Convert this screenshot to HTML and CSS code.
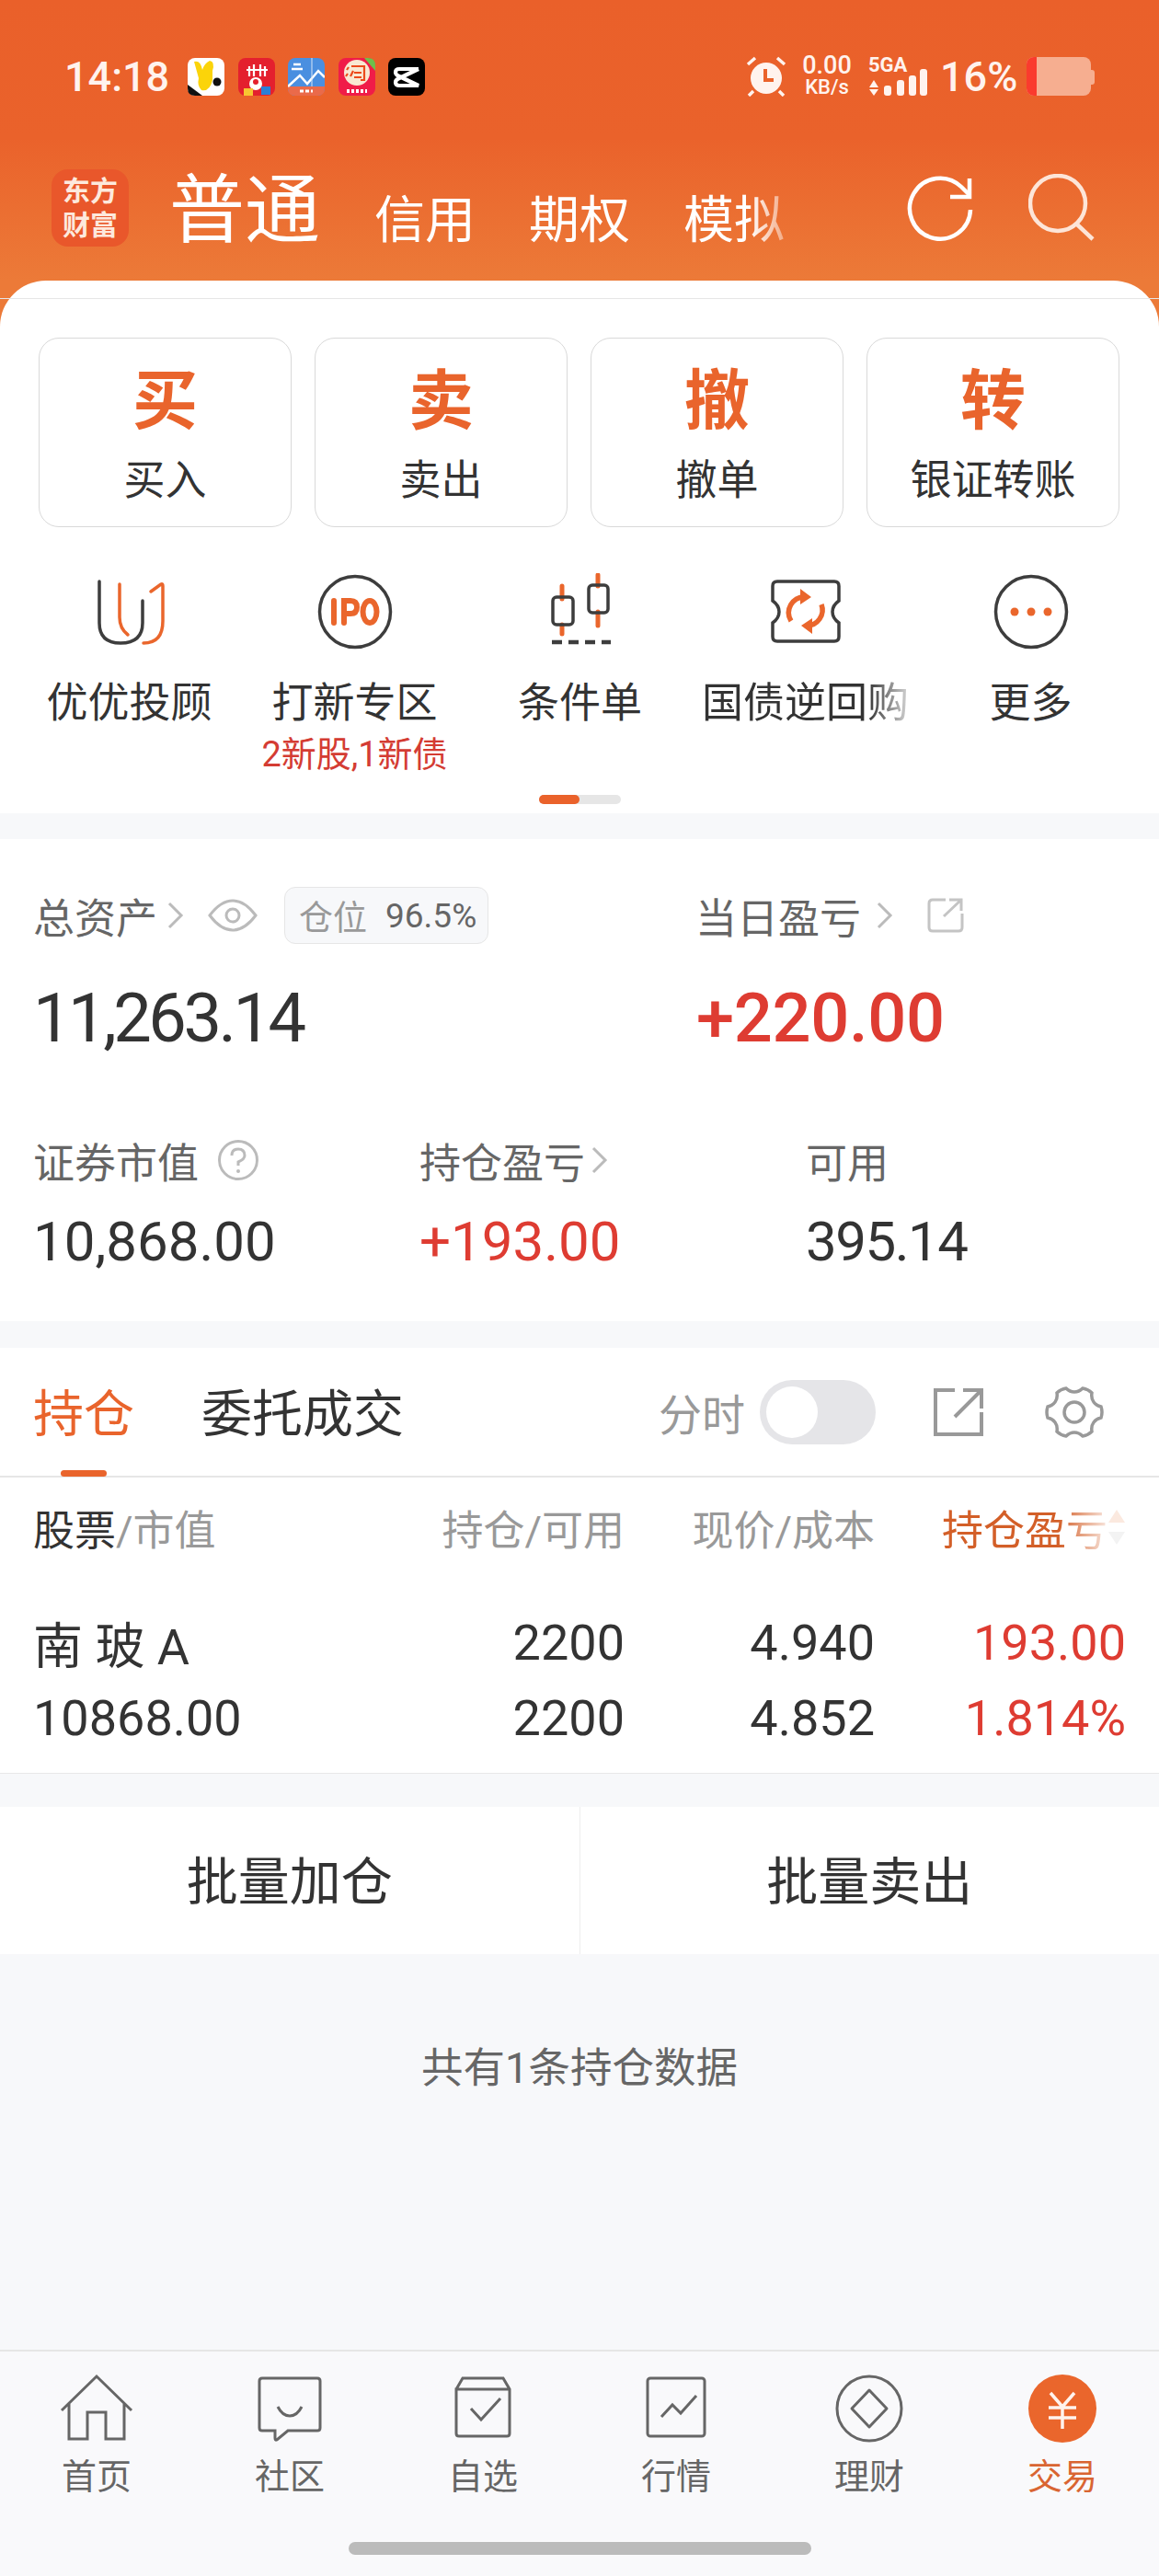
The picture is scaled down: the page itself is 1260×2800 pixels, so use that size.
FILE: index.html
```html
<!DOCTYPE html>
<html lang="zh-CN">
  <head>
    <meta charset="UTF-8" />
    <meta name="viewport" content="width=device-width, initial-scale=1.0" />
    <title>交易</title>
    <link rel="stylesheet" href="styles.css">
  </head>

  <body>
    <div class="header">
      <div class="status-bar">
        <span class="time">14:18</span>
        <div class="app-icons">
          <svg class="app-icon" viewBox="0 0 40 41"><rect width="40" height="41" rx="8" fill="#fff"/><path d="M0 29 L16 41 H8 Q0 41 0 33Z" fill="#111"/><path d="M7 4 Q14 2 16 13 Q18 6 24 3 Q30 4 27 14 L27 24 Q24 37 15 35 Q10 30 12 22Z" fill="#fbd40a"/><circle cx="32" cy="26" r="4.5" fill="#111"/></svg>
          <svg class="app-icon" viewBox="0 0 40 41"><rect width="40" height="41" rx="8" fill="#e4202e"/><path d="M12 9 V20 M17 7 V20 M24 7 V20 M29 9 V20 M9 13 H32" stroke="#fff" stroke-width="2.2"/><circle cx="19" cy="28" r="7" fill="#fff"/><circle cx="19" cy="26" r="3" fill="#e4202e"/><rect x="25" y="31" width="10" height="9" fill="#2b7fd6"/><rect x="6" y="33" width="10" height="8" fill="#f7c531"/></svg>
          <svg class="app-icon" viewBox="0 0 40 41"><rect width="40" height="41" rx="8" fill="#4a8fe0"/><path d="M0 31 H40 V33 Q40 41 32 41 H8 Q0 41 0 33Z" fill="#ea6a4a"/><path d="M0 31 L13 19 L21 28 L33 14 L40 21" fill="none" stroke="#fff" stroke-width="2.5"/><path d="M26 0 V31" stroke="#d9e6f6"/><path d="M4 12 H16 M6 7 H14" stroke="#fff" stroke-width="2.5"/><path d="M13 36 H27" stroke="#fff" stroke-width="3" stroke-dasharray="4 2"/></svg>
          <svg class="app-icon" viewBox="0 0 40 41"><rect width="40" height="41" rx="8" fill="#f01c48"/><path d="M28 0 H32 Q40 0 40 8 V14Z" fill="#6fbf4a"/><circle cx="20" cy="16" r="14" fill="#f9e8d2"/><path d="M14 9 H28 V24 H24 M11 10 L9 13 M10 17 L8 20 M16 14 L13 20 M17 16 H25 M17 21 H25" fill="none" stroke="#ec4a1c" stroke-width="2.2"/><path d="M9 36 H31" stroke="#fff" stroke-width="4" stroke-dasharray="3 2"/></svg>
          <svg class="app-icon" viewBox="0 0 40 41"><rect width="40" height="41" rx="8" fill="#000"/><path d="M33 12 H12 Q8 12 8 15.5 Q8 18 11 19.5 L33 30 H12 Q8 30 8 26.5 Q8 24 11 22.5 L33 12" fill="none" stroke="#fff" stroke-width="4.2"/></svg>
        </div>
        <div class="status-right">
          <svg class="alarm" viewBox="0 0 44 44"><circle cx="22" cy="24" r="17" fill="#fff3ee"/><path d="M21 14 V26 H30" fill="none" stroke="#ea622b" stroke-width="4"/><path d="M2 9 L10 2 M42 9 L34 2 M8 38 L3 43 M36 38 L41 43" stroke="#fff3ee" stroke-width="3.5"/></svg>
          <div class="net-speed"><span>0.00</span><span class="net-unit">KB/s</span></div>
          <div class="signal">
            <span class="signal-name">5GA</span>
            <svg class="signal-bars" viewBox="0 0 66 42"><path d="M6 25 L11 33 H1Z M6 42 L11 35 H1Z" fill="#fff3ee"/><rect x="17" y="31" width="8" height="11" rx="3" fill="#fff3ee"/><rect x="31" y="25" width="8" height="17" rx="3" fill="#fff3ee"/><rect x="44" y="20" width="8" height="22" rx="3" fill="#fff3ee"/><rect x="56" y="13" width="8" height="29" rx="3" fill="#fff3ee"/></svg>
          </div>
          <span class="battery-pct">16%</span>
          <div class="battery"><span class="battery-level"></span><span class="battery-cap"></span></div>
        </div>
      </div>

      <div class="nav">
        <div class="logo"><span>东方</span><span>财富</span></div>
        <span class="nav-active">普通</span>
        <div class="nav-tabs">
          <span>信用</span>
          <span>期权</span>
          <span class="nav-fade">模拟</span>
        </div>
        <div class="nav-actions">
          <svg class="nav-icon" viewBox="0 0 72 74"><path d="M69 39 A33 33 0 1 1 59 14 L68 23" fill="none" stroke="#fff" stroke-width="4.5"/><path d="M68 5 V25 H47" fill="none" stroke="#fff" stroke-width="4.5"/></svg>
          <svg class="nav-icon" viewBox="0 0 72 74"><ellipse cx="32" cy="32" rx="30" ry="30" fill="none" stroke="#fde5d8" stroke-width="4.5"/><path d="M53 55 L70 71" stroke="#fde5d8" stroke-width="4.5"/></svg>
        </div>
      </div>
    </div>

    <div class="card">
      <div class="card-line"></div>
      <div class="trade-buttons">
        <div class="trade-button"><span class="trade-char">买</span><span class="trade-label">买入</span></div>
        <div class="trade-button"><span class="trade-char">卖</span><span class="trade-label">卖出</span></div>
        <div class="trade-button"><span class="trade-char">撤</span><span class="trade-label">撤单</span></div>
        <div class="trade-button"><span class="trade-char">转</span><span class="trade-label">银证转账</span></div>
      </div>

      <div class="shortcuts">
        <div class="shortcut">
          <svg class="shortcut-icon" viewBox="0 0 84 84"><path d="M9 9 V54 Q9 76 32 76 Q56 76 56 54 V30" fill="none" stroke="#3d3d3d" stroke-width="3.5" stroke-linecap="round"/><path d="M31 12 V48 Q31 60 40 67" fill="none" stroke="#ea662c" stroke-width="3.5" stroke-linecap="round"/><path d="M65 20 L76 12 Q78 11 78 14 V52 Q78 76 57 76" fill="none" stroke="#ea662c" stroke-width="3.5" stroke-linecap="round"/></svg>
          <span class="shortcut-label">优优投顾</span>
        </div>
        <div class="shortcut">
          <svg class="shortcut-icon" viewBox="0 0 84 84"><circle cx="42" cy="42" r="38.5" fill="none" stroke="#3d3d3d" stroke-width="3.5"/><path d="M19 30 V54 M30 54 V30 H37 Q44 30 44 37 Q44 44 37 44 H30" fill="none" stroke="#ea662c" stroke-width="6" stroke-linecap="round"/><ellipse cx="58" cy="42" rx="7.5" ry="12" fill="none" stroke="#ea662c" stroke-width="6"/></svg>
          <span class="shortcut-label">打新专区</span>
          <span class="shortcut-sub">2新股,1新债</span>
        </div>
        <div class="shortcut">
          <svg class="shortcut-icon" viewBox="0 0 84 84"><path d="M22 14 V28 M22 56 V66 M61 2 V14 M61 42 V57" stroke="#ea662c" stroke-width="5" stroke-linecap="round"/><rect x="12" y="26" width="22" height="30" rx="4" fill="none" stroke="#3d3d3d" stroke-width="3.5"/><rect x="51" y="13" width="21" height="30" rx="4" fill="none" stroke="#3d3d3d" stroke-width="3.5"/><path d="M11 75 H75" stroke="#3d3d3d" stroke-width="4.5" stroke-dasharray="11 7"/></svg>
          <span class="shortcut-label">条件单</span>
        </div>
        <div class="shortcut">
          <svg class="shortcut-icon" viewBox="0 0 84 84"><path d="M6 14 Q6 9 11 9 H73 Q78 9 78 14 V30 Q71 35 71 42 Q71 49 78 54 V69 Q78 74 73 74 H11 Q6 74 6 69 V54 Q13 49 13 42 Q13 35 6 30Z" fill="none" stroke="#3d3d3d" stroke-width="3.5"/><path d="M26 52 A17 17 0 0 1 41 26 M59 34 A17 17 0 0 1 43 57" fill="none" stroke="#ea662c" stroke-width="5.5"/><path d="M36 17 L48 26 L36 34Z M49 49 L37 57 L49 66Z" fill="#ea662c"/></svg>
          <span class="shortcut-label shortcut-fade">国债逆回购</span>
        </div>
        <div class="shortcut">
          <svg class="shortcut-icon" viewBox="0 0 84 84"><circle cx="42" cy="42" r="38.5" fill="none" stroke="#3d3d3d" stroke-width="3.5"/><circle cx="24" cy="42" r="4.5" fill="#ea662c"/><circle cx="42" cy="42" r="4.5" fill="#ea662c"/><circle cx="60" cy="42" r="4.5" fill="#ea662c"/></svg>
          <span class="shortcut-label">更多</span>
        </div>
      </div>
      <div class="pager"><span class="pager-on"></span></div>
    </div>

    <div class="assets">
      <div class="asset-top">
        <div class="asset-main">
          <div class="asset-label">
            <span>总资产</span>
            <svg class="chevron" viewBox="0 0 20 32"><path d="M3 3 L16 16 L3 29" fill="none" stroke="#bbb" stroke-width="3"/></svg>
            <svg class="eye" viewBox="0 0 54 36"><path d="M2 18 Q14 2 27 2 Q40 2 52 18 Q40 34 27 34 Q14 34 2 18Z" fill="none" stroke="#bbb" stroke-width="3"/><circle cx="27" cy="18" r="7" fill="none" stroke="#bbb" stroke-width="3"/></svg>
            <div class="position-tag"><span class="position-name">仓位</span><span class="position-value">96.5%</span></div>
          </div>
          <div class="asset-value">11,263.14</div>
        </div>
        <div class="asset-day">
          <div class="asset-label">
            <span>当日盈亏</span>
            <svg class="chevron chevron-wide" viewBox="0 0 20 32"><path d="M3 3 L16 16 L3 29" fill="none" stroke="#bbb" stroke-width="3"/></svg>
            <svg class="share-small" viewBox="0 0 40 40"><path d="M20 3 H6 Q2 3 2 7 V33 Q2 37 6 37 H34 Q38 37 38 33 V18" fill="none" stroke="#c4c4c4" stroke-width="3"/><path d="M18 21 L37 3 M24 3 H37 V15" fill="none" stroke="#c4c4c4" stroke-width="3"/></svg>
          </div>
          <div class="asset-value asset-up up">+220.00</div>
        </div>
      </div>
      <div class="asset-bottom">
        <div class="asset-cell">
          <div class="asset-label">
            <span>证券市值</span>
            <svg class="help" viewBox="0 0 46 46"><circle cx="23" cy="23" r="20.5" fill="none" stroke="#bbb" stroke-width="3"/><path d="M16 18 Q16 11 23 11 Q30 11 30 18 Q30 22 23 25 V29" fill="none" stroke="#bbb" stroke-width="3"/><circle cx="23" cy="35" r="2" fill="#bbb"/></svg>
          </div>
          <div class="cell-value">10,868.00</div>
        </div>
        <div class="asset-cell">
          <div class="asset-label">
            <span>持仓盈亏</span>
            <svg class="chevron chevron-tight" viewBox="0 0 20 32"><path d="M3 3 L16 16 L3 29" fill="none" stroke="#bbb" stroke-width="3"/></svg>
          </div>
          <div class="cell-value up">+193.00</div>
        </div>
        <div class="asset-cell">
          <div class="asset-label"><span>可用</span></div>
          <div class="cell-value cell-narrow">395.14</div>
        </div>
      </div>
    </div>

    <div class="holdings">
      <div class="tabs">
        <div class="tab tab-active">持仓<span class="tab-bar"></span></div>
        <div class="tab">委托成交</div>
        <div class="tab-tools">
          <span class="toggle-label">分时</span>
          <div class="toggle"><span class="toggle-knob"></span></div>
          <svg class="tool-share" viewBox="0 0 56 56"><path d="M24 4 H3 V52 H53 V28" fill="none" stroke="#999" stroke-width="4"/><path d="M24 33 L52 5 M33 4 H53 V24" fill="none" stroke="#999" stroke-width="4"/></svg>
          <svg class="tool-gear" viewBox="0 0 64 62"><path d="M23 5 Q27 9 32 9 Q37 9 41 5 Q47 6 51 10 Q50 16 53 20 Q56 24 61 25 Q63 31 61 37 Q56 38 53 42 Q50 46 51 52 Q47 56 41 57 Q37 53 32 53 Q27 53 23 57 Q17 56 13 52 Q14 46 11 42 Q8 38 3 37 Q1 31 3 25 Q8 24 11 20 Q14 16 13 10 Q17 6 23 5Z" fill="none" stroke="#999" stroke-width="3.5"/><circle cx="32" cy="31" r="11" fill="none" stroke="#999" stroke-width="3.5"/></svg>
        </div>
      </div>

      <div class="table-head">
        <div class="col col-name"><span class="head-dark">股票</span>/市值</div>
        <div class="col col-num">持仓/可用</div>
        <div class="col col-num col-price">现价/成本</div>
        <div class="col col-profit head-sort">
          <span class="head-sort-text">持仓盈亏</span>
          <svg class="sort-arrows" viewBox="0 0 20 40"><path d="M10 1 L19 15 H1Z" fill="#fbe9df"/><path d="M10 39 L19 25 H1Z" fill="#f3f3f3"/></svg>
        </div>
      </div>

      <div class="table-row row-top">
        <div class="col col-name">南 玻 A</div>
        <div class="col col-num">2200</div>
        <div class="col col-num col-price">4.940</div>
        <div class="col col-profit up">193.00</div>
      </div>
      <div class="table-row">
        <div class="col col-name">10868.00</div>
        <div class="col col-num">2200</div>
        <div class="col col-num col-price">4.852</div>
        <div class="col col-profit up">1.814%</div>
      </div>
    </div>

    <div class="batch">
      <div class="batch-button">批量加仓</div>
      <div class="batch-button">批量卖出</div>
    </div>

    <div class="summary">共有1条持仓数据</div>

    <div class="tabbar">
      <div class="tabbar-items">
        <div class="tabbar-item">
          <svg class="tabbar-icon" viewBox="0 0 80 76"><path d="M2 40 L40 3 L78 40 M10 33 V71 H30 V42 H50 V71 H70 V33" fill="none" stroke="#666" stroke-width="3"/></svg>
          <span>首页</span>
        </div>
        <div class="tabbar-item">
          <svg class="tabbar-icon" viewBox="0 0 80 76"><path d="M10 5 H70 Q73 5 73 8 V59 Q73 62 70 62 H38 L26 72 Q24 73 24 70 V62 H10 Q7 62 7 59 V8 Q7 5 10 5Z" fill="none" stroke="#666" stroke-width="3"/><path d="M27 36 Q32 46 40 46 Q48 46 53 36" fill="none" stroke="#666" stroke-width="3"/></svg>
          <span>社区</span>
        </div>
        <div class="tabbar-item">
          <svg class="tabbar-icon" viewBox="0 0 80 76"><path d="M11 17 L18 5 H62 L69 17 V65 Q69 68 66 68 H14 Q11 68 11 65 V17 H69" fill="none" stroke="#666" stroke-width="3"/><path d="M27 38 L38 50 L59 27" fill="none" stroke="#666" stroke-width="3"/></svg>
          <span>自选</span>
        </div>
        <div class="tabbar-item">
          <svg class="tabbar-icon" viewBox="0 0 80 76"><rect x="9" y="5" width="62" height="63" rx="3" fill="none" stroke="#666" stroke-width="3"/><path d="M24 47 L36 34 L45 43 L62 24" fill="none" stroke="#666" stroke-width="3"/></svg>
          <span>行情</span>
        </div>
        <div class="tabbar-item">
          <svg class="tabbar-icon" viewBox="0 0 80 76"><circle cx="40" cy="38" r="35" fill="none" stroke="#666" stroke-width="3"/><path d="M40 18 L59 38 L40 58 L21 38Z" fill="none" stroke="#666" stroke-width="3" stroke-linejoin="round"/></svg>
          <span>理财</span>
        </div>
        <div class="tabbar-item tabbar-active">
          <svg class="tabbar-icon" viewBox="0 0 80 76"><circle cx="40" cy="38" r="37" fill="#ea662c"/><path d="M27 21 L40 36 L53 21 M25 37 H55 M25 48 H55 M40 36 V60" fill="none" stroke="#fff3ee" stroke-width="3.5"/></svg>
          <span>交易</span>
        </div>
      </div>
      <div class="home-bar"></div>
    </div>
  </body>
</html>
```

FILE: styles.css
```css
* {
  box-sizing: border-box;
}

html,
body {
  margin: 0;
}

body {
  width: 1260px;
  height: 2800px;
  display: flex;
  flex-direction: column;
  background-color: #f7f8fa;
  color: #333;
  font-family: Roboto, "Noto Sans CJK SC", sans-serif;
  overflow: hidden;
}

svg {
  display: block;
  flex: none;
}

.up {
  color: #de3c32;
}

/* orange header */
.header {
  height: 355px;
  flex: none;
  padding: 62px 70px 0 56px;
  background: linear-gradient(#ea602a 0, #ea622b 150px, #ec7a38 305px);
  color: white;
}

.status-bar {
  display: flex;
  align-items: center;
  height: 42px;
}

.time {
  width: 148px;
  padding-left: 14px;
  font-size: 45px;
  font-weight: 500;
  color: #fff3ee;
}

.app-icons {
  display: flex;
  gap: 14.5px;
}

.app-icon {
  width: 40px;
  height: 41px;
}

.status-right {
  display: flex;
  align-items: center;
  margin-left: auto;
  padding-right: 4px;
  color: #fff3ee;
}

.alarm {
  width: 44px;
  height: 44px;
}

.net-speed {
  display: flex;
  flex-direction: column;
  align-items: center;
  width: 54px;
  margin-left: 17px;
  font-size: 27px;
  font-weight: 500;
  line-height: 23px;
}

.net-unit {
  font-size: 22px;
}

.signal {
  position: relative;
  width: 66px;
  height: 42px;
  margin-left: 18px;
}

.signal-name {
  position: absolute;
  left: 0;
  top: -3px;
  font-size: 22px;
  font-weight: 700;
  line-height: 24px;
}

.signal-bars {
  width: 66px;
  height: 42px;
}

.battery-pct {
  width: 84px;
  margin-left: 12px;
  font-size: 45px;
  font-weight: 500;
}

.battery {
  position: relative;
  display: flex;
  width: 70px;
  height: 42px;
  margin-left: 10px;
  border-radius: 8px;
  background-color: #f6ae90;
}

.battery-level {
  width: 11px;
  border-radius: 8px 0 0 8px;
  background-color: #fa3b2e;
}

.battery-cap {
  position: absolute;
  right: -4px;
  top: 14px;
  width: 4px;
  height: 16px;
  border-radius: 0 3px 3px 0;
  background-color: #f6ae90;
}

.nav {
  display: flex;
  align-items: flex-end;
  height: 84px;
  margin-top: 80px;
}

.logo {
  display: flex;
  flex-direction: column;
  justify-content: center;
  align-items: center;
  width: 84px;
  height: 84px;
  border-radius: 18px;
  background-color: #e9572b;
  font-size: 30px;
  font-weight: 700;
  line-height: 37px;
  color: #fde9dd;
}

.nav-active {
  margin-left: 44px;
  font-size: 82px;
  line-height: 78px;
}

.nav-tabs {
  display: flex;
  gap: 58px;
  margin-left: 59px;
  font-size: 55px;
  line-height: 58px;
}

.nav-fade {
  -webkit-mask-image: linear-gradient(to right, #000 65%, rgba(0, 0, 0, 0.4) 100%);
  mask-image: linear-gradient(to right, #000 65%, rgba(0, 0, 0, 0.4) 100%);
}

.nav-actions {
  display: flex;
  gap: 60px;
  margin-left: auto;
  margin-bottom: 5px;
}

.nav-icon {
  width: 72px;
  height: 74px;
}

/* white card with trade buttons */
.card {
  flex: none;
  height: 579px;
  margin-top: -50px;
  position: relative;
  border-radius: 50px 50px 0 0;
  background-color: white;
}

.card-line {
  height: 1px;
  margin-top: 19px;
  background-color: #e6e6e6;
}

.trade-buttons {
  display: grid;
  grid-template-columns: repeat(4, 275px);
  gap: 25px;
  padding: 42px 0 0 42px;
}

.trade-button {
  display: flex;
  flex-direction: column;
  align-items: center;
  height: 206px;
  border: 1.5px solid #d9d9d9;
  border-radius: 22px;
}

.trade-char {
  margin-top: 24px;
  font-size: 71px;
  font-weight: 700;
  line-height: 88px;
  color: #e9642c;
}

.trade-label {
  margin-top: 13px;
  font-size: 45px;
  line-height: 60px;
}

.shortcuts {
  display: grid;
  grid-template-columns: repeat(5, 245px);
  padding: 50px 0 0 18px;
}

.shortcut {
  display: flex;
  flex-direction: column;
  align-items: center;
}

.shortcut-icon {
  width: 84px;
  height: 84px;
}

.shortcut-label {
  margin-top: 27px;
  font-size: 45px;
  line-height: 62px;
}

.shortcut-sub {
  font-size: 38px;
  line-height: 49px;
  color: #d43c33;
}

.shortcut-fade {
  -webkit-mask-image: linear-gradient(to right, #000 80%, rgba(0, 0, 0, 0.2) 100%);
  mask-image: linear-gradient(to right, #000 80%, rgba(0, 0, 0, 0.2) 100%);
}

.pager {
  position: absolute;
  left: 586px;
  top: 559px;
  width: 89px;
  height: 10px;
  border-radius: 5px;
  background-color: #e6e6e6;
}

.pager-on {
  display: block;
  width: 44px;
  height: 10px;
  border-radius: 5px;
  background-color: #ea622b;
}

/* assets */
.assets {
  flex: none;
  height: 524px;
  margin-top: 28px;
  padding: 52px 0 0 36px;
  background-color: white;
}

.asset-top {
  display: flex;
  height: 266px;
}

.asset-main {
  width: 720px;
}

.asset-label {
  display: flex;
  align-items: center;
  height: 62px;
  font-size: 45px;
  color: #666;
}

.chevron {
  width: 20px;
  height: 32px;
  margin-left: 10px;
}

.chevron-wide {
  margin-left: 16px;
}

.chevron-tight {
  margin-left: 6px;
}

.eye {
  width: 54px;
  height: 36px;
  margin-left: 25px;
}

.position-tag {
  display: flex;
  align-items: center;
  gap: 20px;
  height: 62px;
  margin-left: 29px;
  padding: 0 12px 0 15px;
  border: 1.5px solid #e6e6e6;
  border-radius: 12px;
  background-color: #f7f8fa;
  font-size: 37px;
}

.position-name {
  color: #999;
}

.share-small {
  width: 40px;
  height: 40px;
  margin-left: 36px;
}

.asset-value {
  margin-top: 36px;
  font-size: 74px;
  line-height: 90px;
  letter-spacing: -3.5px;
}

.asset-up {
  margin-left: 1px;
  font-weight: 500;
  letter-spacing: -0.3px;
}

.asset-bottom {
  display: flex;
}

.asset-cell {
  flex: none;
  width: 420px;
}

.help {
  width: 46px;
  height: 46px;
  margin-left: 20px;
}

.cell-value {
  margin-top: 22px;
  font-size: 60px;
  line-height: 72px;
}

.cell-narrow {
  letter-spacing: -1.5px;
}

/* holdings table */
.holdings {
  flex: none;
  height: 463px;
  margin-top: 29px;
  border-bottom: 1.5px solid #e8e8e8;
  background-color: white;
}

.tabs {
  display: flex;
  align-items: center;
  height: 141px;
  padding: 0 60px 0 36px;
  border-bottom: 2px solid #e6e6e6;
}

.tab {
  position: relative;
  padding-top: 6px;
  font-size: 55px;
  line-height: 135px;
  margin-right: 73px;
}

.tab-active {
  color: #e9642c;
}

.tab-bar {
  position: absolute;
  left: 30px;
  bottom: 0;
  width: 50px;
  height: 7px;
  border-radius: 4px;
  background-color: #e9642c;
}

.tab-tools {
  display: flex;
  align-items: center;
  margin-left: auto;
}

.toggle-label {
  font-size: 47px;
  color: #999;
}

.toggle {
  width: 126px;
  height: 70px;
  margin-left: 16px;
  padding: 7px;
  border-radius: 35px;
  background-color: #e5e5e8;
}

.toggle-knob {
  display: block;
  width: 56px;
  height: 56px;
  border-radius: 50%;
  background-color: white;
}

.tool-share {
  width: 56px;
  height: 56px;
  margin-left: 62px;
}

.tool-gear {
  width: 64px;
  height: 62px;
  margin-left: 66px;
}

.table-head,
.table-row {
  display: flex;
  padding-left: 36px;
}

.table-head {
  height: 108px;
  align-items: center;
  font-size: 45px;
  color: #999;
}

.table-row {
  height: 82px;
  align-items: center;
  font-size: 54px;
}

.row-top {
  margin-top: 30px;
}

.col-name {
  flex: none;
  width: 351px;
}

.col-num {
  flex: none;
  width: 292px;
  text-align: right;
}

.col-price {
  width: 272px;
}

.col-profit {
  flex: none;
  width: 273px;
  text-align: right;
}

.head-dark {
  color: #333;
}

.head-sort {
  display: flex;
  align-items: center;
  justify-content: flex-end;
  color: #d35f28;
}

.head-sort-text {
  -webkit-mask-image: linear-gradient(to right, #000 70%, rgba(0, 0, 0, 0.15) 100%);
  mask-image: linear-gradient(to right, #000 70%, rgba(0, 0, 0, 0.15) 100%);
}

.sort-arrows {
  width: 20px;
  height: 40px;
}

.batch {
  display: flex;
  flex: none;
  height: 160px;
  margin-top: 36px;
  background-color: white;
}

.batch-button {
  flex: 1;
  font-size: 56px;
  line-height: 164px;
  text-align: center;
}

.batch-button + .batch-button {
  border-left: 1.5px solid #eee;
}

.summary {
  flex: 1;
  padding-top: 94px;
  font-size: 45.5px;
  line-height: 62px;
  text-align: center;
  color: #666;
}

/* bottom tab bar */
.tabbar {
  flex: none;
  height: 246px;
  border-top: 2px solid #e6e6e6;
  background-color: #f9f9fb;
}

.tabbar-items {
  display: grid;
  grid-template-columns: repeat(6, 210px);
  padding-top: 24px;
}

.tabbar-item {
  display: flex;
  flex-direction: column;
  align-items: center;
  font-size: 38px;
  line-height: 50px;
  color: #666;
}

.tabbar-icon {
  width: 80px;
  height: 76px;
  margin-bottom: 11px;
}

.tabbar-active {
  color: #d96532;
}

.home-bar {
  width: 503px;
  height: 14px;
  margin: 46px auto 0;
  border-radius: 7px;
  background-color: #bbb;
}
```
